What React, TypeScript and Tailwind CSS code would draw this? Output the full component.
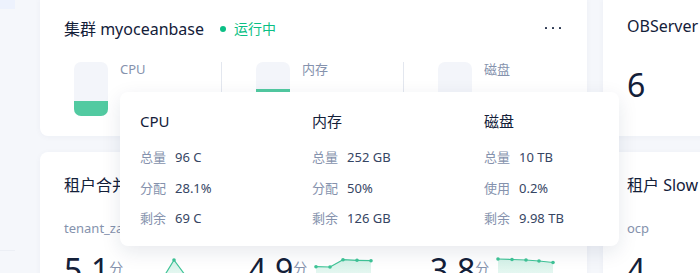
type Pt = [number, number];

const GREEN = "#3fc497";

function Spark({ id, pts }: { id: string; pts: Pt[] }) {
  const line = pts.map(([x, y], i) => `${i ? "L" : "M"}${x} ${y}`).join(" ");
  const area = `${line} L${pts[pts.length - 1][0]} 40 L${pts[0][0]} 40 Z`;
  return (
    <svg width="60" height="40" viewBox="0 0 60 40" className="mt-[7px] shrink-0">
      <defs>
        <linearGradient id={id} x1="0" y1="0" x2="0" y2="1">
          <stop offset="0%" stopColor={GREEN} stopOpacity="0.22" />
          <stop offset="100%" stopColor={GREEN} stopOpacity="0" />
        </linearGradient>
      </defs>
      <path d={area} fill={`url(#${id})`} />
      <path d={line} fill="none" stroke={GREEN} strokeWidth="1.2" strokeLinejoin="round" />
      {pts.map(([x, y], i) => (
        <circle key={i} cx={x} cy={y} r="1.8" fill={GREEN} />
      ))}
    </svg>
  );
}

function UsageBar({ label, pct, first, last }: { label: string; pct: number; first?: boolean; last?: boolean }) {
  return (
    <div
      className={`flex shrink-0 ${first ? "w-[158px] pl-[10px]" : "pl-[34px]"} ${last ? "" : "border-r border-[#e3e7ef]"} ${
        !first && !last ? "w-[182px]" : ""
      }`}
    >
      <div className="w-[34px] h-[54px] rounded-[7px] bg-[#f3f5fa] overflow-hidden flex flex-col justify-end">
        <div className="bg-[#52caa1]" style={{ height: `${pct}%` }} />
      </div>
      <div className="ml-[12px] -mt-[3px] text-[13px] leading-[20px] text-[#8592ad]">{label}</div>
    </div>
  );
}

function Score({ value, id, pts, className }: { value: string; id: string; pts: Pt[]; className: string }) {
  return (
    <div className={`flex items-start ${className}`}>
      <div className="w-[66px] shrink-0 flex items-start">
        <span className="text-[32px] leading-[40px] text-[#132039]">{value}</span>
        <span className="mt-[8px] text-[14px] leading-[20px] text-[#8592ad]">分</span>
      </div>
      <Spark id={id} pts={pts} />
    </div>
  );
}

const detail = [
  { title: "CPU", rows: [["总量", "96 C"], ["分配", "28.1%"], ["剩余", "69 C"]] },
  { title: "内存", rows: [["总量", "252 GB"], ["分配", "50%"], ["剩余", "126 GB"]] },
  { title: "磁盘", rows: [["总量", "10 TB"], ["使用", "0.2%"], ["剩余", "9.98 TB"]] },
];

export default function App() {
  return (
    <div className="relative w-[700px] h-[273px] overflow-hidden bg-[#f5f7fb] font-['Noto_Sans','Noto_Sans_CJK_SC',sans-serif]">
      <div className="flex">
        {/* left edge of the previous column */}
        <div className="w-[15px] shrink-0 flex flex-col">
          <div className="h-[9px] bg-[#edf2fd]" />
          <div className="mt-[241px] h-[1px] bg-[#eceff5]" />
        </div>

        <div className="ml-[25px] -mt-[7px] flex flex-col gap-[16px]">
          <div className="flex gap-[16px]">
            {/* cluster card */}
            <div className="w-[547px] shrink-0 rounded-[8px] bg-white pt-[24px] pb-[20px] pl-[24px] pr-[26px] shadow-[0_1px_6px_rgba(30,50,90,0.04)]">
              <div className="flex justify-between">
                <div className="flex items-center h-[24px]">
                  <span className="text-[16px] leading-[24px] text-[#132039]">集群 myoceanbase</span>
                  <span className="ml-[16px] w-[6px] h-[6px] rounded-full bg-[#0bbf85]" />
                  <span className="ml-[8px] text-[14px] leading-[20px] text-[#0bbf85]">运行中</span>
                </div>
                <div className="h-[22px] flex items-center gap-[4.5px]">
                  <span className="w-[2.5px] h-[2.5px] rounded-[0.5px] bg-[#2a3650]" />
                  <span className="w-[2.5px] h-[2.5px] rounded-[0.5px] bg-[#2a3650]" />
                  <span className="w-[2.5px] h-[2.5px] rounded-[0.5px] bg-[#2a3650]" />
                </div>
              </div>
              <div className="mt-[21px] flex">
                <UsageBar label="CPU" pct={28.1} first />
                <UsageBar label="内存" pct={50} />
                <UsageBar label="磁盘" pct={0.2} last />
              </div>
            </div>

            {/* observer card */}
            <div className="w-[547px] shrink-0 rounded-[8px] bg-white pt-[21px] pl-[24px] shadow-[0_1px_6px_rgba(30,50,90,0.04)]">
              <div className="text-[16px] leading-[24px] text-[#132039]">OBServer</div>
              <div className="mt-[27px] text-[32px] leading-[40px] text-[#132039]">6</div>
            </div>
          </div>

          <div className="flex gap-[16px]">
            {/* tenant compaction card */}
            <div className="w-[547px] h-[160px] shrink-0 rounded-[8px] bg-white pt-[21px] pl-[24px] shadow-[0_1px_6px_rgba(30,50,90,0.04)]">
              <div className="text-[16px] leading-[24px] text-[#132039]">租户合并 Top3</div>
              <div className="mt-[21px] flex">
                <div className="w-[184px] shrink-0">
                  <div className="text-[13px] leading-[20px] text-[#8592ad]">tenant_zaaa</div>
                  <Score
                    className="mt-[12px]"
                    value="5.1"
                    id="g1"
                    pts={[[2, 30], [16, 32], [30, 26], [44, 3], [58, 22]]}
                  />
                </div>
                <div className="w-[182px] shrink-0">
                  <div className="text-[13px] leading-[20px] text-[#8592ad]">tenant_b</div>
                  <Score
                    className="mt-[12px]"
                    value="4.9"
                    id="g2"
                    pts={[[2, 9.7], [16, 10], [29, 2.7], [43, 3.3], [57, 3.7]]}
                  />
                </div>
                <div>
                  <div className="text-[13px] leading-[20px] text-[#8592ad]">tenant_c</div>
                  <Score
                    className="mt-[12px]"
                    value="3.8"
                    id="g3"
                    pts={[[2, 2], [16, 2.5], [30, 3], [43, 4], [57, 5.5]]}
                  />
                </div>
              </div>
            </div>

            {/* slow sql card */}
            <div className="w-[547px] h-[160px] shrink-0 rounded-[8px] bg-white pt-[21px] pl-[24px] shadow-[0_1px_6px_rgba(30,50,90,0.04)]">
              <div className="text-[16px] leading-[24px] text-[#132039]">租户 Slow SQL Top3</div>
              <div className="mt-[21px] text-[13px] leading-[20px] text-[#8592ad]">ocp</div>
              <div className="mt-[12px] text-[32px] leading-[40px] text-[#132039]">4</div>
            </div>
          </div>
        </div>
      </div>

      {/* resource popover */}
      <div className="absolute left-[120px] top-[92px] w-[499px] h-[154px] rounded-[8px] bg-white pt-[17px] pl-[20px] flex overflow-hidden shadow-[0_6px_20px_rgba(20,40,80,0.10)]">
        {detail.map((col) => (
          <div key={col.title} className="w-[172px] shrink-0">
            <div className="text-[15px] leading-[24px] text-[#132039]">{col.title}</div>
            <div className="mt-[13px] flex flex-col gap-[8.5px]">
              {col.rows.map(([k, v]) => (
                <div key={k} className="flex text-[13px] leading-[22px]">
                  <span className="text-[#8592ad]">{k}</span>
                  <span className="ml-[9px] text-[#364563]">{v}</span>
                </div>
              ))}
            </div>
          </div>
        ))}
      </div>
    </div>
  );
}
